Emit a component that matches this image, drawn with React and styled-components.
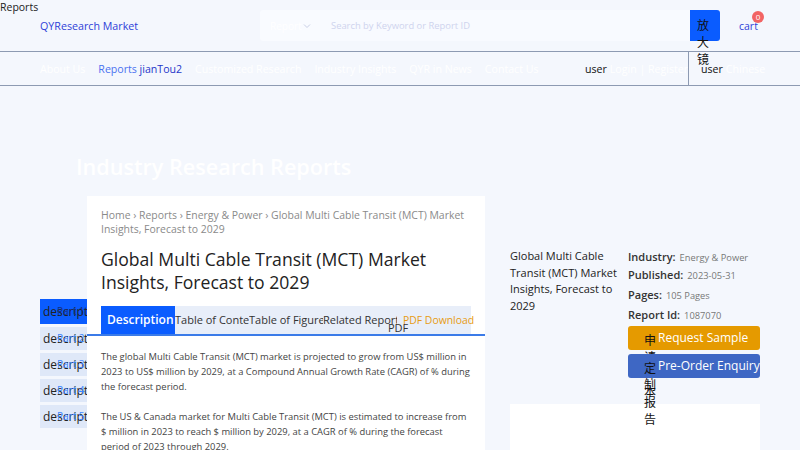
import React from "react";
import styled, { createGlobalStyle } from "styled-components";

const Global = createGlobalStyle`
  html, body { margin: 0; padding: 0; }
  body {
    background: #f4f7fd;
    font-family: "Open Sans", "Noto Sans CJK SC", sans-serif;
    color: #222;
    width: 800px;
    height: 450px;
    overflow: hidden;
  }
  * { box-sizing: border-box; }
`;

const Page = styled.div`
  position: relative;
  width: 800px;
  height: 450px;
  overflow: hidden;
`;

const TopLabel = styled.div`
  position: absolute;
  left: 0;
  top: 0;
  font-size: 10.5px;
  line-height: 15px;
  color: #222;
`;

const Header = styled.header`
  display: flex;
  align-items: center;
  height: 51px;
  padding: 0 0 0 40px;
`;

const Logo = styled.div`
  font-size: 10.7px;
  color: #2f3fd8;
  width: 220px;
`;

const SearchGroup = styled.div`
  display: flex;
  height: 31px;
  width: 460px;
`;

const Select = styled.div`
  width: 60px;
  background: #f9fbff;
  display: flex;
  align-items: center;
  justify-content: space-between;
  padding: 0 9px 0 10px;
  font-size: 10px;
  color: #fff;
  border-radius: 3px 0 0 3px;
`;

const SearchInput = styled.div`
  flex: 1;
  background: #f8faff;
  display: flex;
  align-items: center;
  padding-left: 11px;
  font-size: 9.4px;
  color: #cfd4ee;
`;

const SearchButton = styled.div`
  width: 30px;
  height: 31px;
  flex-shrink: 0;
  background: #0a5cff;
  border-radius: 0 3px 3px 0;
  padding: 7px 9px 0 7px;
  font-size: 12px;
  line-height: 17px;
  color: #111;
  word-break: break-all;
`;

const Cart = styled.div`
  position: relative;
  margin-left: 19px;
  font-size: 10.5px;
  color: #2f3fd8;
`;

const Badge = styled.span`
  position: absolute;
  top: -8px;
  left: 13px;
  width: 12px;
  height: 12px;
  border-radius: 50%;
  background: #f26464;
  color: #fff;
  font-size: 8px;
  line-height: 12px;
  text-align: center;
`;

const Nav = styled.nav`
  display: flex;
  align-items: center;
  height: 35px;
  border-top: 1px solid #8d9ab2;
  border-bottom: 1px solid #8d9ab2;
  padding-left: 40px;
  font-size: 10.6px;
`;

const NavItem = styled.span`
  color: ${(p) => p.$color || "#fff"};
  margin-right: 13px;
  white-space: nowrap;
`;

const Dark = styled.span`
  color: #2436c9;
`;

const UserArea = styled.div`
  display: flex;
  align-items: center;
  height: 100%;
  margin-left: auto;
  white-space: nowrap;
`;

const UserCell = styled.div`
  display: flex;
  align-items: center;
  height: 100%;
  width: ${(p) => p.$w}px;
  padding-left: ${(p) => (p.$sep ? 12 : 0)}px;
  overflow: hidden;
  border-left: ${(p) => (p.$sep ? "1px solid #8d9ab2" : "none")};
`;

const User = styled.span`
  color: #111;
  margin-right: 3px;
`;

const Ghost = styled.span`
  color: #fff;
`;

const Hero = styled.div`
  height: 110px;
  padding: 68px 0 0 76px;
`;

const HeroTitle = styled.h1`
  margin: 0;
  font-size: 21.6px;
  font-weight: 600;
  line-height: 26px;
  color: #fff;
`;

const Content = styled.div`
  display: flex;
  align-items: flex-start;
  padding-left: 40px;
`;

const SideMenu = styled.div`
  width: 47px;
  margin-top: 103px;
  display: flex;
  flex-direction: column;
  gap: 3px;
  overflow: hidden;
`;

const SideItem = styled.div`
  position: relative;
  height: ${(p) => (p.$active ? 25 : 23)}px;
  background: ${(p) => (p.$active ? "#0a5cff" : "#dfe8f8")};
  padding-left: 3px;
  font-size: 12px;
  line-height: ${(p) => (p.$active ? 25 : 23)}px;
  color: #222;
  white-space: nowrap;
`;

const SideOverlay = styled.span`
  position: absolute;
  left: 17px;
  top: 0;
  font-size: 10px;
  color: ${(p) => (p.$active ? "#14307f" : "#3d86ff")};
`;

const MainCard = styled.main`
  width: 398px;
  height: 260px;
  background: #fff;
  padding: 12px 14px 0;
  position: relative;
  z-index: 1;
`;

const Crumbs = styled.div`
  font-size: 10.45px;
  line-height: 14px;
  color: #8a8a8a;
`;

const Title = styled.h2`
  margin: 12px 0 12px;
  font-size: 17.6px;
  font-weight: 500;
  line-height: 23px;
  color: #222;
`;

const Tabs = styled.div`
  display: flex;
  margin: 0 -14px;
  padding: 0 14px;
  border-bottom: 2px solid #3b7be8;
`;

const Tab = styled.div`
  width: 74px;
  height: 28px;
  flex-shrink: 0;
  background: ${(p) => (p.$active ? "#0a5cff" : "#e8eef9")};
  color: ${(p) => (p.$active ? "#fff" : p.$color || "#333")};
  font-size: ${(p) => (p.$active ? 12 : p.$size || 11)}px;
  font-weight: ${(p) => (p.$active ? 600 : 400)};
  line-height: 28px;
  padding-left: ${(p) => p.$pad || 0}px;
  white-space: nowrap;
  overflow: ${(p) => (p.$clip ? "hidden" : "visible")};
  position: relative;
`;

const TabExtra = styled.span`
  position: absolute;
  left: 65px;
  top: 15px;
  line-height: 14px;
  z-index: 2;
`;

const Para = styled.p`
  margin: 13px 0 15px;
  font-size: 9.38px;
  line-height: 15px;
  color: #444;
`;

const RightCol = styled.aside`
  width: 250px;
  margin-left: 25px;
  padding-top: 52px;
  display: flex;
  flex-direction: column;
`;

const InfoRow = styled.div`
  display: flex;
  gap: 3px;
`;

const RTitle = styled.div`
  width: 115px;
  font-size: 11px;
  line-height: 16.5px;
  color: #222;
`;

const Info = styled.div`
  flex: 1;
  display: flex;
  flex-direction: column;
`;

const Meta = styled.div`
  height: ${(p) => p.$h}px;
  font-size: 11px;
  line-height: ${(p) => p.$h}px;
  white-space: nowrap;
`;

const MetaLabel = styled.b`
  font-weight: 600;
  color: #333;
  margin-right: 4px;
`;

const MetaValue = styled.span`
  font-size: 9.3px;
  color: #777;
`;

const ActionButton = styled.div`
  position: relative;
  height: 24px;
  margin-top: ${(p) => p.$mt}px;
  border-radius: 3px;
  background: ${(p) => p.$bg};
  display: flex;
  align-items: flex-start;
  padding-left: 16px;
  color: #fff;
  font-size: 12px;
`;

const ButtonIcon = styled.span`
  width: 12px;
  flex-shrink: 0;
  margin-top: 6px;
  font-size: 12px;
  line-height: 17px;
  color: #111;
  word-break: break-all;
`;

const ButtonText = styled.span`
  margin-left: 2px;
  line-height: 24px;
`;

const SideCard = styled.div`
  margin-top: 26px;
  height: 120px;
  background: #fff;
`;

export default function App() {
  const sideItems = [1, 2, 3, 4, 5];
  return (
    <Page>
      <Global />
      <TopLabel>Reports</TopLabel>
      <Header>
        <Logo>QYResearch Market</Logo>
        <SearchGroup>
          <Select>
            Report
            <svg width="8" height="8" viewBox="0 0 8 8">
              <path d="M1 2.5 L4 5.5 L7 2.5" fill="none" stroke="#c9cfe6" strokeWidth="1" />
            </svg>
          </Select>
          <SearchInput>Search by Keyword or Report ID</SearchInput>
          <SearchButton>放大镜</SearchButton>
        </SearchGroup>
        <Cart>
          cart
          <Badge>0</Badge>
        </Cart>
      </Header>
      <Nav>
        <NavItem>About Us</NavItem>
        <NavItem $color="#4a72f0">
          Reports <Dark>jianTou2</Dark>
        </NavItem>
        <NavItem>Customized Research</NavItem>
        <NavItem>Industry Insights</NavItem>
        <NavItem>QYR in News</NavItem>
        <NavItem>Contact Us</NavItem>
        <UserArea>
          <UserCell $w={103}>
            <User>user</User>
            <Ghost>Login | Register</Ghost>
          </UserCell>
          <UserCell $sep $w={112}>
            <User>user</User>
            <Ghost>Chinese</Ghost>
          </UserCell>
        </UserArea>
      </Nav>
      <Hero>
        <HeroTitle>Industry Research Reports</HeroTitle>
      </Hero>
      <Content>
        <SideMenu>
          {sideItems.map((n) => (
            <SideItem key={n} $active={n === 1}>
              description
              <SideOverlay $active={n === 1}>Part {n}</SideOverlay>
            </SideItem>
          ))}
        </SideMenu>
        <MainCard>
          <Crumbs>
            Home › Reports › Energy &amp; Power › Global Multi Cable Transit (MCT) Market Insights,
            Forecast to 2029
          </Crumbs>
          <Title>Global Multi Cable Transit (MCT) Market Insights, Forecast to 2029</Title>
          <Tabs>
            <Tab $active $pad={6}>Description</Tab>
            <Tab $clip>Table of Contents</Tab>
            <Tab $clip>Table of Figure</Tab>
            <Tab>
              Related Report
              <TabExtra>PDF</TabExtra>
            </Tab>
            <Tab $color="#e79b12" $pad={6} $size={10.4}>PDF Download</Tab>
          </Tabs>
          <Para>
            The global Multi Cable Transit (MCT) market is projected to grow from US$ million in
            2023 to US$ million by 2029, at a Compound Annual Growth Rate (CAGR) of % during the
            forecast period.
          </Para>
          <Para>
            The US &amp; Canada market for Multi Cable Transit (MCT) is estimated to increase from
            $ million in 2023 to reach $ million by 2029, at a CAGR of % during the forecast period
            of 2023 through 2029.
          </Para>
        </MainCard>
        <RightCol>
          <InfoRow>
            <RTitle>Global Multi Cable Transit (MCT) Market Insights, Forecast to 2029</RTitle>
            <Info>
              <Meta $h={17}>
                <MetaLabel>Industry:</MetaLabel>
                <MetaValue>Energy &amp; Power</MetaValue>
              </Meta>
              <Meta $h={20}>
                <MetaLabel>Published:</MetaLabel>
                <MetaValue>2023-05-31</MetaValue>
              </Meta>
              <Meta $h={20}>
                <MetaLabel>Pages:</MetaLabel>
                <MetaValue>105 Pages</MetaValue>
              </Meta>
              <Meta $h={20}>
                <MetaLabel>Report Id:</MetaLabel>
                <MetaValue>1087070</MetaValue>
              </Meta>
              <ActionButton $bg="#e59a00" $mt={1}>
                <ButtonIcon>申请样本</ButtonIcon>
                <ButtonText>Request Sample</ButtonText>
              </ActionButton>
              <ActionButton $bg="#3e67c4" $mt={4}>
                <ButtonIcon>定制报告</ButtonIcon>
                <ButtonText>Pre-Order Enquiry</ButtonText>
              </ActionButton>
            </Info>
          </InfoRow>
          <SideCard />
        </RightCol>
      </Content>
    </Page>
  );
}
